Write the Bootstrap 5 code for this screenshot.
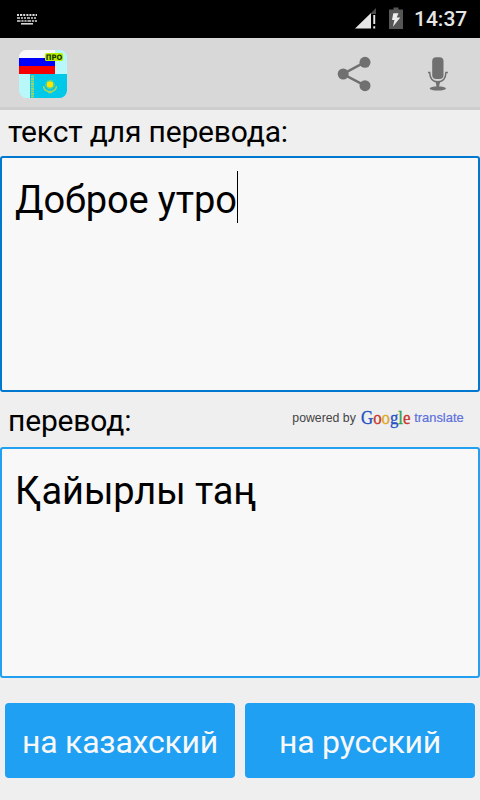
<!DOCTYPE html>
<html lang="ru">
<head>
<meta charset="utf-8">
<meta name="viewport" content="width=device-width, initial-scale=1">
<title>Переводчик</title>
<link href="https://cdn.jsdelivr.net/npm/bootstrap@5.3.0/dist/css/bootstrap.min.css" rel="stylesheet">
<style>
body { font-family: Roboto, sans-serif; background: #efefef; color: #000; width: 480px; height: 800px; overflow: hidden; }
.status-bar { height: 38px; background: #000; color: #e6e6e6; }
.clock { font-size: 21px; font-weight: 500; line-height: 40px; width: 56px; margin-left: 11px; margin-right: 10px; }
.action-bar { height: 72px; background: #d8d8d8; border-bottom: 3px solid #cecece; padding-left: 19px; }
.action-btn svg, .app-icon, .status-bar svg { display: block; }
.app-icon { margin-top: 12px; }
.field-label { font-size: 30px; line-height: 44px; padding-left: 8px; letter-spacing: -.16px; white-space: nowrap; }
.label-source { height: 46px; }
.label-result { height: 55px; padding-top: 7px; }
.text-box { background: #f8f8f8; border: 2px solid #0078d0; border-radius: 3px; font-size: 38px; line-height: 52px; letter-spacing: -.1px; padding: 13px 13px; white-space: nowrap; }
.box-source { height: 236px; }
.box-result { height: 231px; border-color: #229ff0; }
.entry { padding-top: 3px; margin-bottom: -3px; }
.caret { width: 1px; height: 52px; background: #000; }
.attribution { width: 180px; height: 26px; margin-right: 12px; margin-top: 6px; letter-spacing: 0; }
.btn-lang { --bs-btn-color: #f8f8f8; --bs-btn-bg: #20a0f2; --bs-btn-border-radius: 4px; --bs-btn-border-width: 0; height: 75px; font-size: 32px; line-height: 75px; letter-spacing: -.22px; padding: 2px 0 0; white-space: nowrap; }
.btn-row { padding: 25px 5px 0; gap: 10px; }
</style>
<script src="https://cdn.jsdelivr.net/npm/bootstrap@5.3.0/dist/js/bootstrap.bundle.min.js"></script>
</head>
<body class="d-flex flex-column">
<header>
  <div class="status-bar d-flex align-items-center">
    <svg class="me-auto" width="40" height="38" viewBox="0 0 40 38" stroke="#d8d8d8" fill="none">
      <path d="M17 15h20" stroke-width="2" stroke-dasharray="2 1 2.2 1 2 1.2 2 1"/>
      <path d="M17 18h20" stroke-width="1.7" stroke-dasharray="3 1 2 1 2 1"/>
      <path d="M17 21h20" stroke-width="1.7" stroke-dasharray="3.6 .8 2.2 .8 2.2 .8"/>
      <path d="M21 23.8h12" stroke-width="1.6"/>
    </svg>
    <svg width="50" height="38" viewBox="353 0 50 38">
      <path d="M371 13v15.500h-16z" fill="#e6e6e6"/>
      <path d="M371 13l5-5v6h-5z" fill="#4b4b4b"/>
      <path d="M373.300 15h1.900v9h-1.900zM373.300 26.300h1.900v2.300h-1.900z" fill="#e6e6e6"/>
      <path d="M393.500 7.500h5v2h4.500v19.500h-14v-19.500h4.500z" fill="#565656"/>
      <path d="M393.300 13.200h5.200l-1.800 4.300h3.600l-7.400 9.200 1.500-6.700h-2.400z" fill="#ececec"/>
    </svg>
    <div class="clock">14:37</div>
  </div>
  <nav class="action-bar d-flex align-items-start">
    <svg class="app-icon me-auto" width="48" height="48" viewBox="0 0 48 48" role="img" aria-label="Переводчик ПРО">
      <defs><clipPath id="tile"><rect width="48" height="48" rx="7.500"/></clipPath></defs>
      <g clip-path="url(#tile)">
        <path fill="#b9f8fa" d="M0 0h48v48H0z"/>
        <path fill="#f9f9f9" d="M0 0h36v8H0z"/><path fill="#00f" d="M0 8h36v8H0z"/><path fill="#f80000" d="M0 16h36v8H0z"/>
        <path fill="#00c8e8" d="M11 24h37v24H11z"/>
        <path d="M13.500 25.500v22" stroke="#9bd36a" stroke-width="3" stroke-dasharray="2 .5"/>
        <path d="M24.500 36q.5 5.500 6.500 5.500t6.500-5.500M27 40l3 2.500h2l3-2.500" fill="none" stroke="#a4d85a" stroke-width="1.500"/>
        <circle cx="31" cy="34.500" r="3.300" fill="#ffe600"/>
        <circle cx="31" cy="34.500" r="4.200" fill="none" stroke="#c8e030" stroke-width="1" stroke-dasharray="1 .8"/>
        <rect x="26" y="3" width="18" height="8" rx="1.500" fill="#b8f000"/>
        <text x="26.800" y="9.800" font-family="DejaVu Sans" font-size="7.500" font-weight="bold" fill="#123000" textLength="16.500" lengthAdjust="spacingAndGlyphs">ПРО</text>
      </g>
    </svg>
    <a class="action-btn" href="#" aria-label="Поделиться">
      <svg width="76" height="69" viewBox="320 38 76 69" fill="#707070">
        <path d="M365 62.200L343 74l22 11.700" fill="none" stroke="#707070" stroke-width="2.500"/>
        <circle cx="365" cy="62.300" r="5.500"/><circle cx="343.200" cy="74" r="5.500"/><circle cx="365" cy="85.700" r="5.500"/>
      </svg>
    </a>
    <a class="action-btn" href="#" aria-label="Голосовой ввод">
      <svg width="84" height="69" viewBox="396 38 84 69" fill="#707070">
        <rect x="432.200" y="57.300" width="11.300" height="21.700" rx="4"/>
        <path d="M428 72.500h1.700q.3 9.300 8.100 9.300t8.100-9.300h2" fill="none" stroke="#707070" stroke-width="1.500"/>
        <path d="M435.500 82h4.600l-1.200 5h-2.200z"/><ellipse cx="437.800" cy="88.400" rx="8.200" ry="2.100"/>
      </svg>
    </a>
  </nav>
</header>
<main>
  <div class="field-label label-source">текст для перевода:</div>
  <div class="text-box box-source d-flex align-items-start"><span class="entry">Доброе утро</span><span class="caret"></span></div>
  <div class="field-label label-result d-flex justify-content-between align-items-start">
    <span>перевод:</span>
    <svg class="attribution" viewBox="288 405 180 26">
      <text x="292.300" y="422" font-family="Liberation Sans" font-size="12.500" fill="#444" textLength="63.500" lengthAdjust="spacingAndGlyphs">powered by</text>
      <text x="361" y="423.500" font-family="Liberation Serif" font-size="19" stroke-width=".35" textLength="49.500" lengthAdjust="spacingAndGlyphs"><tspan fill="#2452c4" stroke="#2452c4">G</tspan><tspan fill="#c8342c" stroke="#c8342c">o</tspan><tspan fill="#dca91c" stroke="#dca91c">o</tspan><tspan fill="#2452c4" stroke="#2452c4">g</tspan><tspan fill="#34a044" stroke="#34a044">l</tspan><tspan fill="#c8342c" stroke="#c8342c">e</tspan></text>
      <text x="414.200" y="421.500" font-family="Liberation Sans" font-size="12.700" fill="#6070dc" stroke="#6070dc" stroke-width=".2" textLength="49.500" lengthAdjust="spacingAndGlyphs">translate</text>
    </svg>
  </div>
  <div class="text-box box-result"><div class="entry">Қайырлы таң</div></div>
  <div class="btn-row d-flex">
    <button class="btn btn-lang w-50" type="button">на казахский</button>
    <button class="btn btn-lang w-50" type="button">на русский</button>
  </div>
</main>
</body>
</html>
